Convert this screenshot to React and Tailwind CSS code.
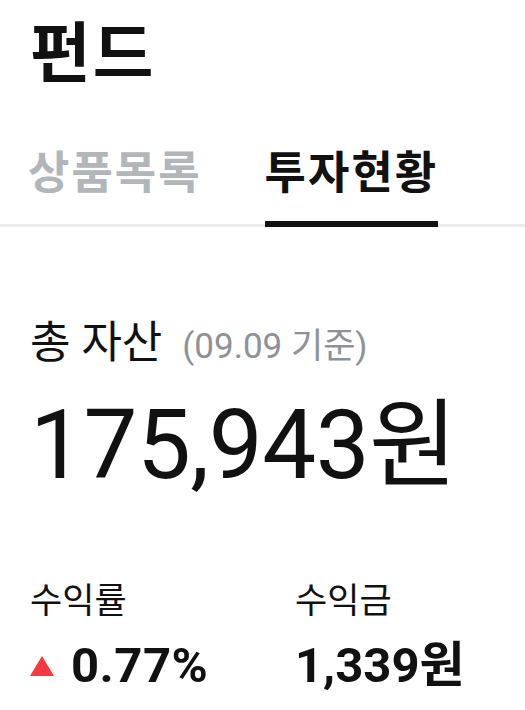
import React from 'react';

const FONT = { fontFamily: 'Roboto, "Noto Sans CJK KR", sans-serif' };

export default function App() {
  return (
    <div className="min-h-screen w-full bg-white text-[#111111]" style={FONT}>
      <h1 className="pl-[30px] pt-[17px] text-[66px] font-bold leading-[76px] tracking-[2px]">펀드</h1>

      <div className="mt-[54px] flex gap-[63px] border-b-[3px] border-[#ececec] pl-[28px]">
        <button type="button" className="pb-[23px] text-[45px] font-bold leading-[54px] tracking-[2px] text-[#b1b6bb]">
          상품목록
        </button>
        <button type="button" className="-mb-[3px] border-b-[6px] border-[#111111] pb-[20px] text-[45px] font-bold leading-[54px] tracking-[2px]">
          투자현황
        </button>
      </div>

      <section className="px-[30px] pt-[90px]">
        <div className="flex items-baseline gap-[20px]">
          <span className="text-[44px] leading-[52px]">총 자산</span>
          <span className="text-[35px] leading-[52px] text-[#8e9297]">(09.09 기준)</span>
        </div>
        <div className="mt-[17px] text-[96px] leading-[110px] tracking-[-0.5px]">175,943원</div>

        <div className="mt-[80px] grid grid-cols-[265px_1fr]">
          <div>
            <div className="text-[35px] leading-[44px]">수익률</div>
            <div className="mt-[14px] flex items-center gap-[17px]">
              <span className="block h-0 w-0 border-x-[12px] border-b-[20px] border-x-transparent border-b-[#f5393f]" />
              <span className="text-[49px] font-bold leading-[56px] tracking-[0.5px]">0.77%</span>
            </div>
          </div>
          <div>
            <div className="text-[35px] leading-[44px]">수익금</div>
            <div className="mt-[14px] text-[49px] font-bold leading-[56px]">1,339원</div>
          </div>
        </div>
      </section>
    </div>
  );
}
